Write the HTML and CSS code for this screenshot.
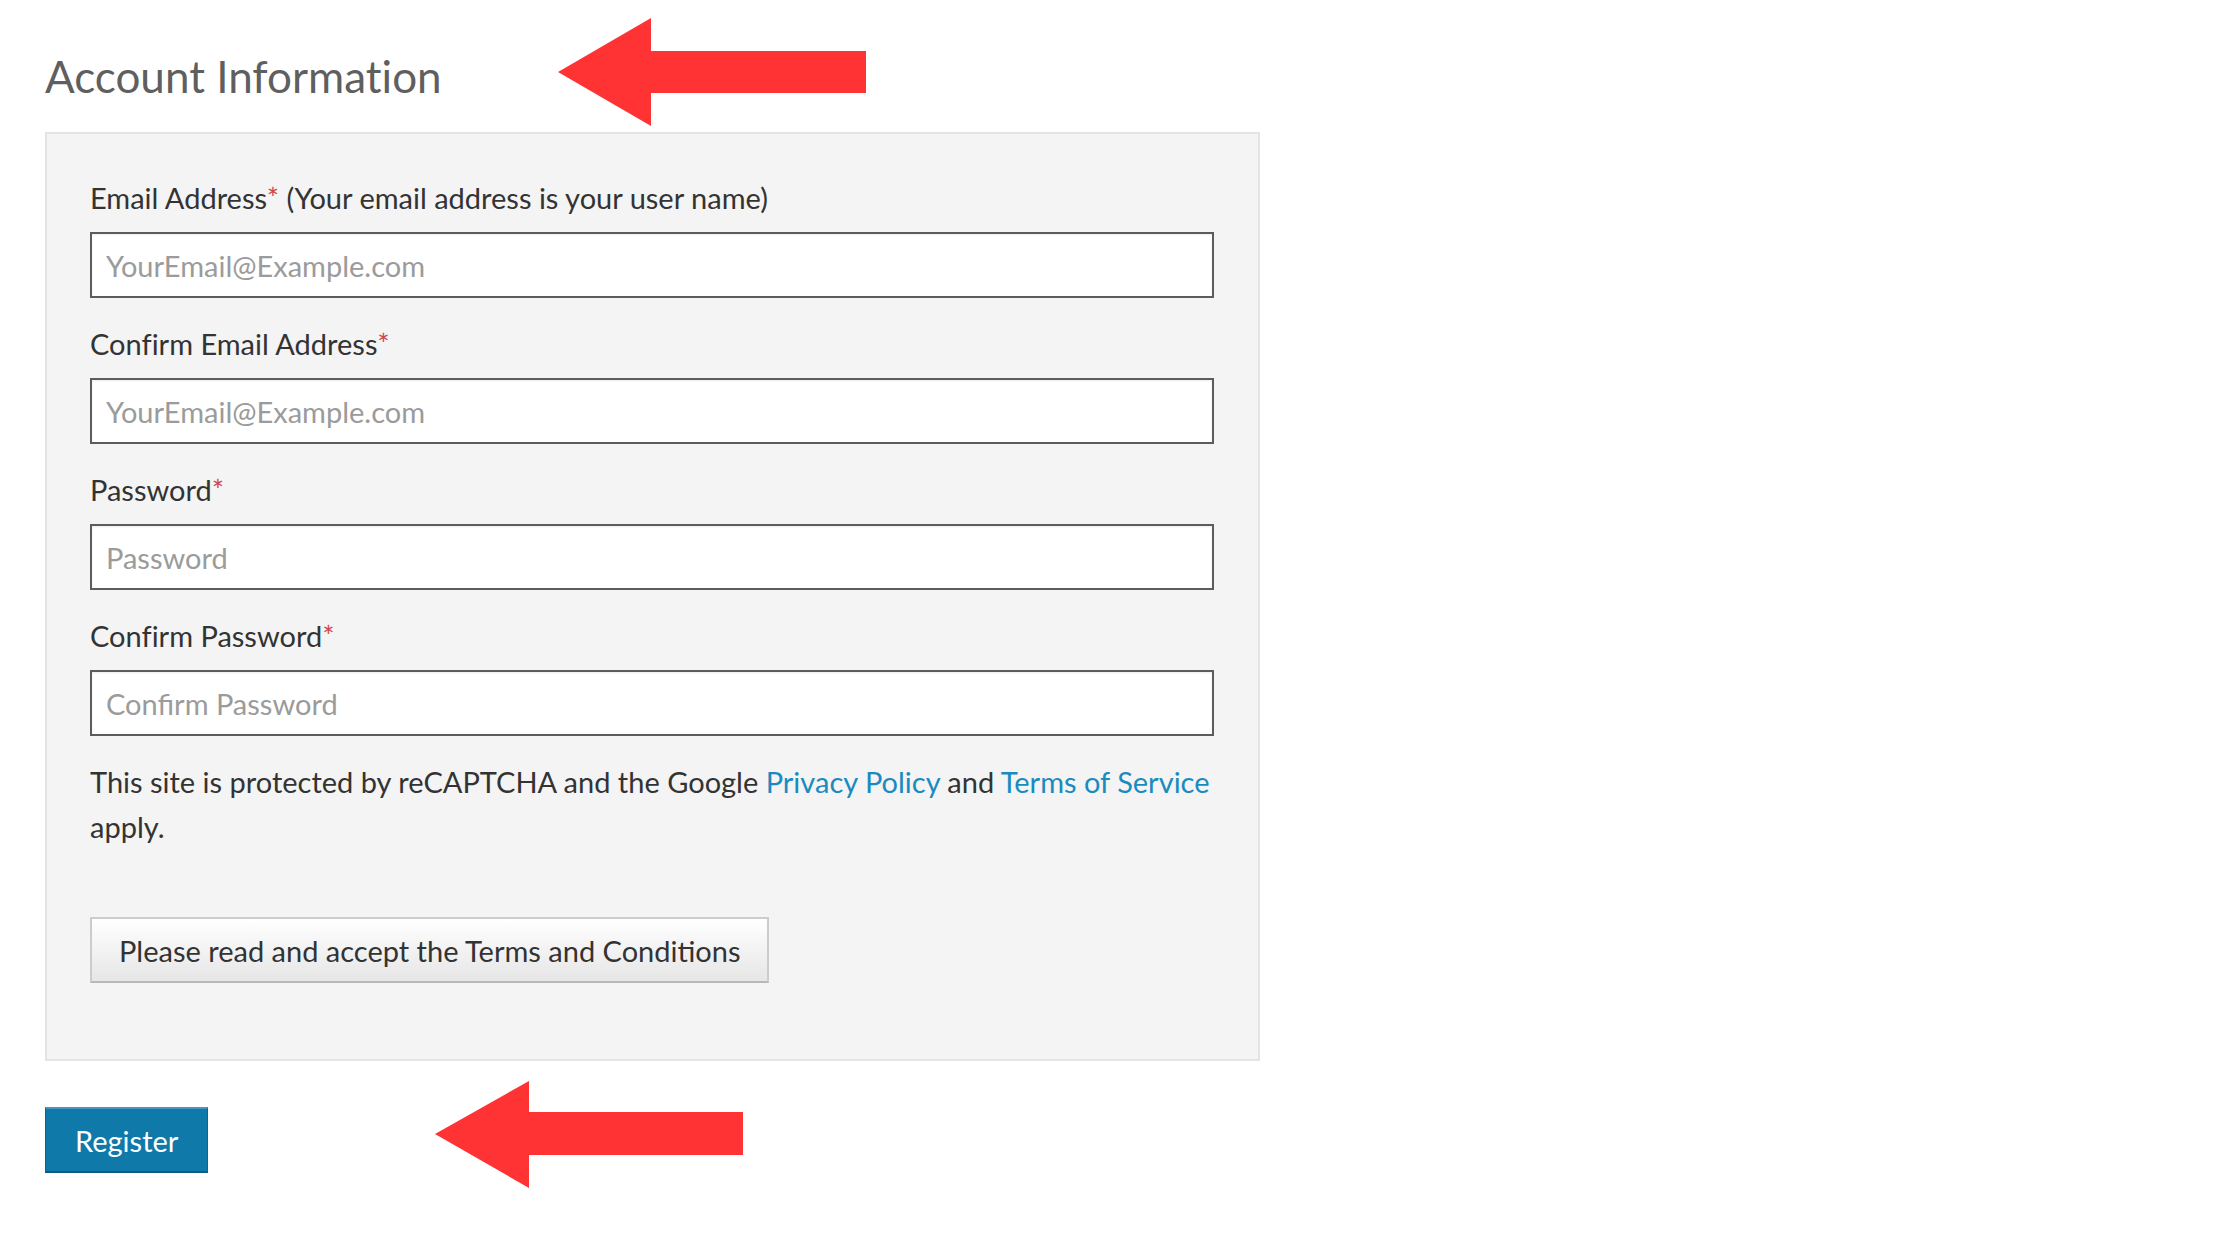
FILE: index.html
```html
<!DOCTYPE html>
<html lang="en">
<head>
<meta charset="utf-8">
<title>Account Information</title>
<link rel="stylesheet" href="styles.css">
</head>
<body>
<div class="page">
  <h1 class="title">Account Information</h1>
  <form class="panel">
    <div class="field">
      <label class="label" for="email">Email Address<span class="req">*</span> (Your email address is your user name)</label>
      <input class="input" id="email" type="text" placeholder="YourEmail@Example.com">
    </div>
    <div class="field">
      <label class="label" for="email2">Confirm Email Address<span class="req">*</span></label>
      <input class="input" id="email2" type="text" placeholder="YourEmail@Example.com">
    </div>
    <div class="field">
      <label class="label" for="pw">Password<span class="req">*</span></label>
      <input class="input" id="pw" type="password" placeholder="Password">
    </div>
    <div class="field field-last">
      <label class="label" for="pw2">Confirm Password<span class="req">*</span></label>
      <input class="input" id="pw2" type="password" placeholder="Confirm Password">
    </div>
    <p class="notice">This site is protected by reCAPTCHA and the Google <a class="link" href="#">Privacy Policy</a> and <a class="link" href="#">Terms of Service</a> apply.</p>
    <button class="terms-btn" type="button">Please read and accept the Terms and Conditions</button>
  </form>
  <button class="register-btn" type="button">Register</button>
</div>
<svg class="arrows" width="2240" height="1260" viewBox="0 0 2240 1260" aria-hidden="true">
  <polygon points="558,72 651,18 651,51 866,51 866,93 651,93 651,126" fill="#ff3333"/>
  <polygon points="435,1134 529,1081 529,1112 743,1112 743,1155 529,1155 529,1188" fill="#ff3333"/>
</svg>
</body>
</html>
```
FILE: styles.css
```css
html, body {
  margin: 0;
  padding: 0;
  background: #ffffff;
}
body {
  font-family: Lato, "Open Sans", "Liberation Sans", sans-serif;
  color: #333333;
  position: relative;
  width: 2240px;
  height: 1260px;
  overflow: hidden;
  font-variant-ligatures: none;
}
.page {
  padding: 50px 0 0 45px;
}
.title {
  margin: 0;
  font-size: 44px;
  line-height: 52px;
  font-weight: 400;
  color: #5f5f5f;
}
.panel {
  margin-top: 30px;
  width: 1215px;
  box-sizing: border-box;
  background: #f4f4f4;
  border: 2px solid #e4e4e4;
  padding: 47px 44px 76px 43px;
}
.field {
  margin-bottom: 29px;
}
.field-last {
  margin-bottom: 23px;
}
.label {
  display: block;
  font-size: 29px;
  line-height: 34px;
  color: #333333;
  margin-bottom: 17px;
}
.req {
  color: #d0464c;
}
.input {
  display: block;
  width: 100%;
  height: 66px;
  box-sizing: border-box;
  border: 2px solid #5c5c5c;
  background: #ffffff;
  padding: 0 14px;
  font-family: inherit;
  font-size: 29px;
  color: #333333;
  outline: none;
  border-radius: 0;
  box-shadow: inset 0 1px 2px rgba(0,0,0,0.08);
}
.input::placeholder {
  color: #9b9b9b;
}
.notice {
  margin: 0 0 1px;
  font-size: 29px;
  line-height: 45px;
  color: #333333;
}
.link {
  color: #1a8bc0;
  text-decoration: none;
}
.terms-btn {
  display: block;
  margin-top: 68px;
  height: 66px;
  padding: 0 26px 0 27px;
  box-sizing: border-box;
  font-family: inherit;
  font-size: 29px;
  color: #333333;
  background: linear-gradient(#ffffff, #e6e6e6);
  border: 2px solid #cccccc;
  border-bottom-color: #b8b8b8;
  border-radius: 0;
}
.register-btn {
  display: block;
  margin-top: 46px;
  height: 66px;
  padding: 0 29px;
  box-sizing: border-box;
  font-family: inherit;
  font-size: 29px;
  color: #ffffff;
  background: #0f79aa;
  border: 1px solid #0b6590;
  border-top: 2px solid #4b96bd;
  border-bottom: 2px solid #0a5c84;
  border-radius: 0;
}
.arrows {
  position: absolute;
  left: 0;
  top: 0;
  pointer-events: none;
}
```
